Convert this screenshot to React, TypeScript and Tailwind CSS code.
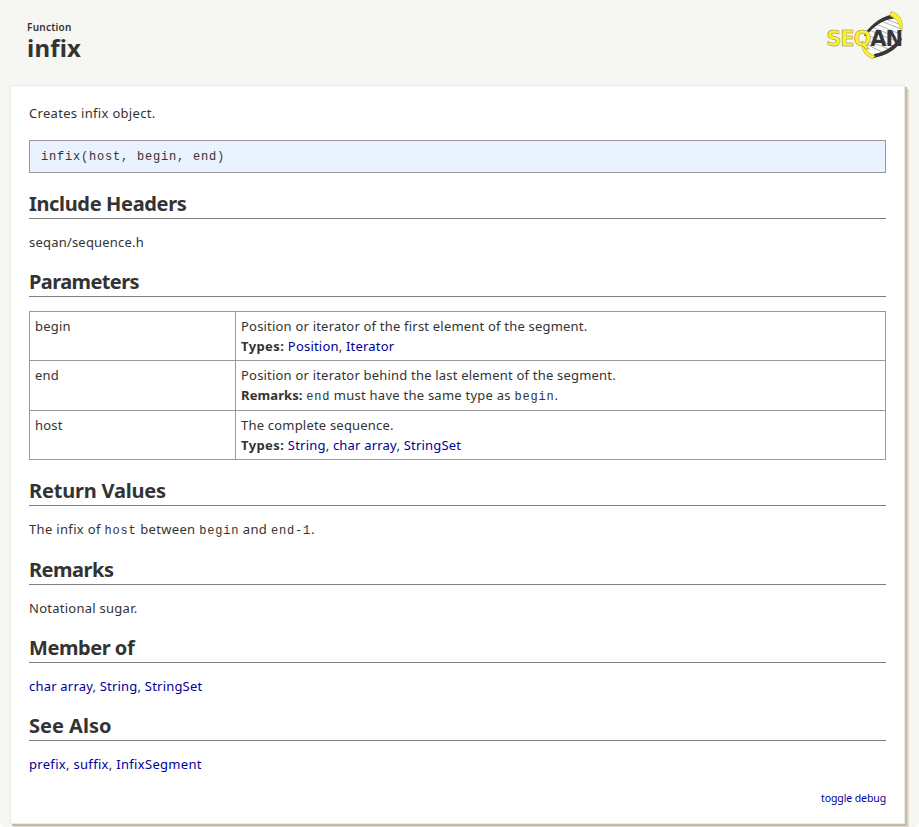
import type { ReactNode } from "react";

function Link({ children }: { children: ReactNode }) {
  return <a href="#" className="text-[#000099]">{children}</a>;
}

function Code({ children }: { children: ReactNode }) {
  return <code className="font-['Liberation_Mono',monospace] text-[12px] tracking-[0.8px]">{children}</code>;
}

function Logo() {
  return (
    <svg className="h-[52px] w-[80px]" viewBox="0 0 80 52" role="img" aria-label="SeqAn">
      <path d="M39 39C36 28 48 14 65 7C73 8 75 14 75 21C75 34 64 42 49 47Z" fill="#fff" fillOpacity=".65" />
      <path d="M60 10L75 16M55 12L75 20M50 15L74 25M46 18L70 28M43 21L70 32M41 26L70 38M40 31L65 41M40 35L58 44" stroke="#aaa" strokeWidth=".9" />
      <path d="M38 27C42 18 52 9 67 5L68 9.500C56 11 47 18 40 27Z" fill="#383637" />
      <path d="M76 29C75 37 63 46 48 49L48 45C60 43 68 36 72 31Z" fill="#383637" />
      <g fill="#fff22c" stroke="#9a943c" strokeWidth=".5">
        <path d="M65 2.500C73 4.500 78 11 76 22L74.500 22C74 14 70 9 64 7Z" />
        <path d="M35.500 32C35 41 39 47 47 50L49 47C43 45 38 41 38 33Z" />
      </g>
      <text y="37" className="font-['DejaVu_Sans',sans-serif] text-[21px] font-bold tracking-[-1.1px]">
        <tspan x="0.300" fill="#fff22c" stroke="#8f8948" strokeWidth=".5">SEQ</tspan>
        <tspan fill="#383637">AN</tspan>
      </text>
    </svg>
  );
}

function Section({ title, tracking, children }: { title: string; tracking: string; children: ReactNode }) {
  return (
    <section>
      <h2 className={`h-[46px] border-b border-[#808080] pt-[17px] text-[20px] leading-[28px] font-bold ${tracking}`}>{title}</h2>
      {children}
    </section>
  );
}

function Row({ name, height, children }: { name: string; height: string; children: ReactNode }) {
  return (
    <div className={`flex border-b border-[#999] ${height}`}>
      <div className="w-[206px] border-r border-[#999] pt-[4px] pl-[5px]">{name}</div>
      <div className="pt-[4px] pl-[5px]">{children}</div>
    </div>
  );
}

export default function App() {
  return (
    <div className="h-[827px] overflow-hidden rounded-b-[5px] bg-[#f6f7f2] font-['Noto_Sans',sans-serif] text-[13px] leading-[20px] tracking-[0.2px] text-[#333]">
      <header className="flex h-[85px] justify-between pr-[13px] pl-[27px]">
        <div className="pt-[20px]">
          <div className="text-[10px] leading-[14px] font-semibold tracking-[0.25px]">Function</div>
          <h1 className="text-[24px] leading-[28px] font-bold tracking-[0.2px]">infix</h1>
        </div>
        <div className="pt-[9px]"><Logo /></div>
      </header>
      <main className="ml-[10px] h-[739px] w-[895px] border border-[#ebebe6] bg-white px-[18px] shadow-[2px_2px_0_#c4bba5,4px_4px_0_#e1dacb]">
        <p className="pt-[17px] tracking-[0.31px]">Creates infix object.</p>
        <div className="mt-[17px] h-[33px] border border-[#999] bg-[#ebf2ff] pt-[7px] pl-[11px] font-['Liberation_Mono',monospace] text-[12px] leading-[19px] tracking-[0.8px]">
          infix(host, begin, end)
        </div>
        <Section title="Include Headers" tracking="tracking-[-0.34px]">
          <p className="h-[32px] pt-[13px]">seqan/sequence.h</p>
        </Section>
        <Section title="Parameters" tracking="tracking-[-0.6px]">
          <div className="mt-[14px] border-x border-t border-[#999]">
            <Row name="begin" height="h-[49px]">
              Position or iterator of the first element of the segment.<br />
              <strong className="tracking-[0.4px]">Types:</strong> <Link>Position</Link>, <Link>Iterator</Link>
            </Row>
            <Row name="end" height="h-[50px]">
              Position or iterator behind the last element of the segment.<br />
              <strong className="tracking-[0.1px]">Remarks:</strong> <Code>end</Code> <span className="tracking-[0.25px]">must have the same type as</span> <Code>begin</Code>.
            </Row>
            <Row name="host" height="h-[49px]">
              The complete sequence.<br />
              <strong className="tracking-[0.4px]">Types:</strong> <Link>String</Link>, <Link>char array</Link>, <Link>StringSet</Link>
            </Row>
          </div>
        </Section>
        <Section title="Return Values" tracking="tracking-[-0.2px]">
          <p className="h-[33px] pt-[13px] tracking-[0.33px]">The infix of <Code>host</Code> between <Code>begin</Code> and <Code>end-1</Code>.</p>
        </Section>
        <Section title="Remarks" tracking="tracking-[-0.5px]">
          <p className="h-[32px] pt-[13px] tracking-[0.26px]">Notational sugar.</p>
        </Section>
        <Section title="Member of" tracking="tracking-[-0.45px]">
          <p className="h-[32px] pt-[13px]"><Link>char array</Link>, <Link>String</Link>, <Link>StringSet</Link></p>
        </Section>
        <Section title="See Also" tracking="tracking-[0px]">
          <p className="h-[32px] pt-[13px] tracking-[0.31px]"><Link>prefix</Link>, <Link>suffix</Link>, <Link>InfixSegment</Link></p>
        </Section>
        <div className="mt-[15px] text-right text-[10.5px] tracking-[-0.1px]"><Link>toggle debug</Link></div>
      </main>
    </div>
  );
}
